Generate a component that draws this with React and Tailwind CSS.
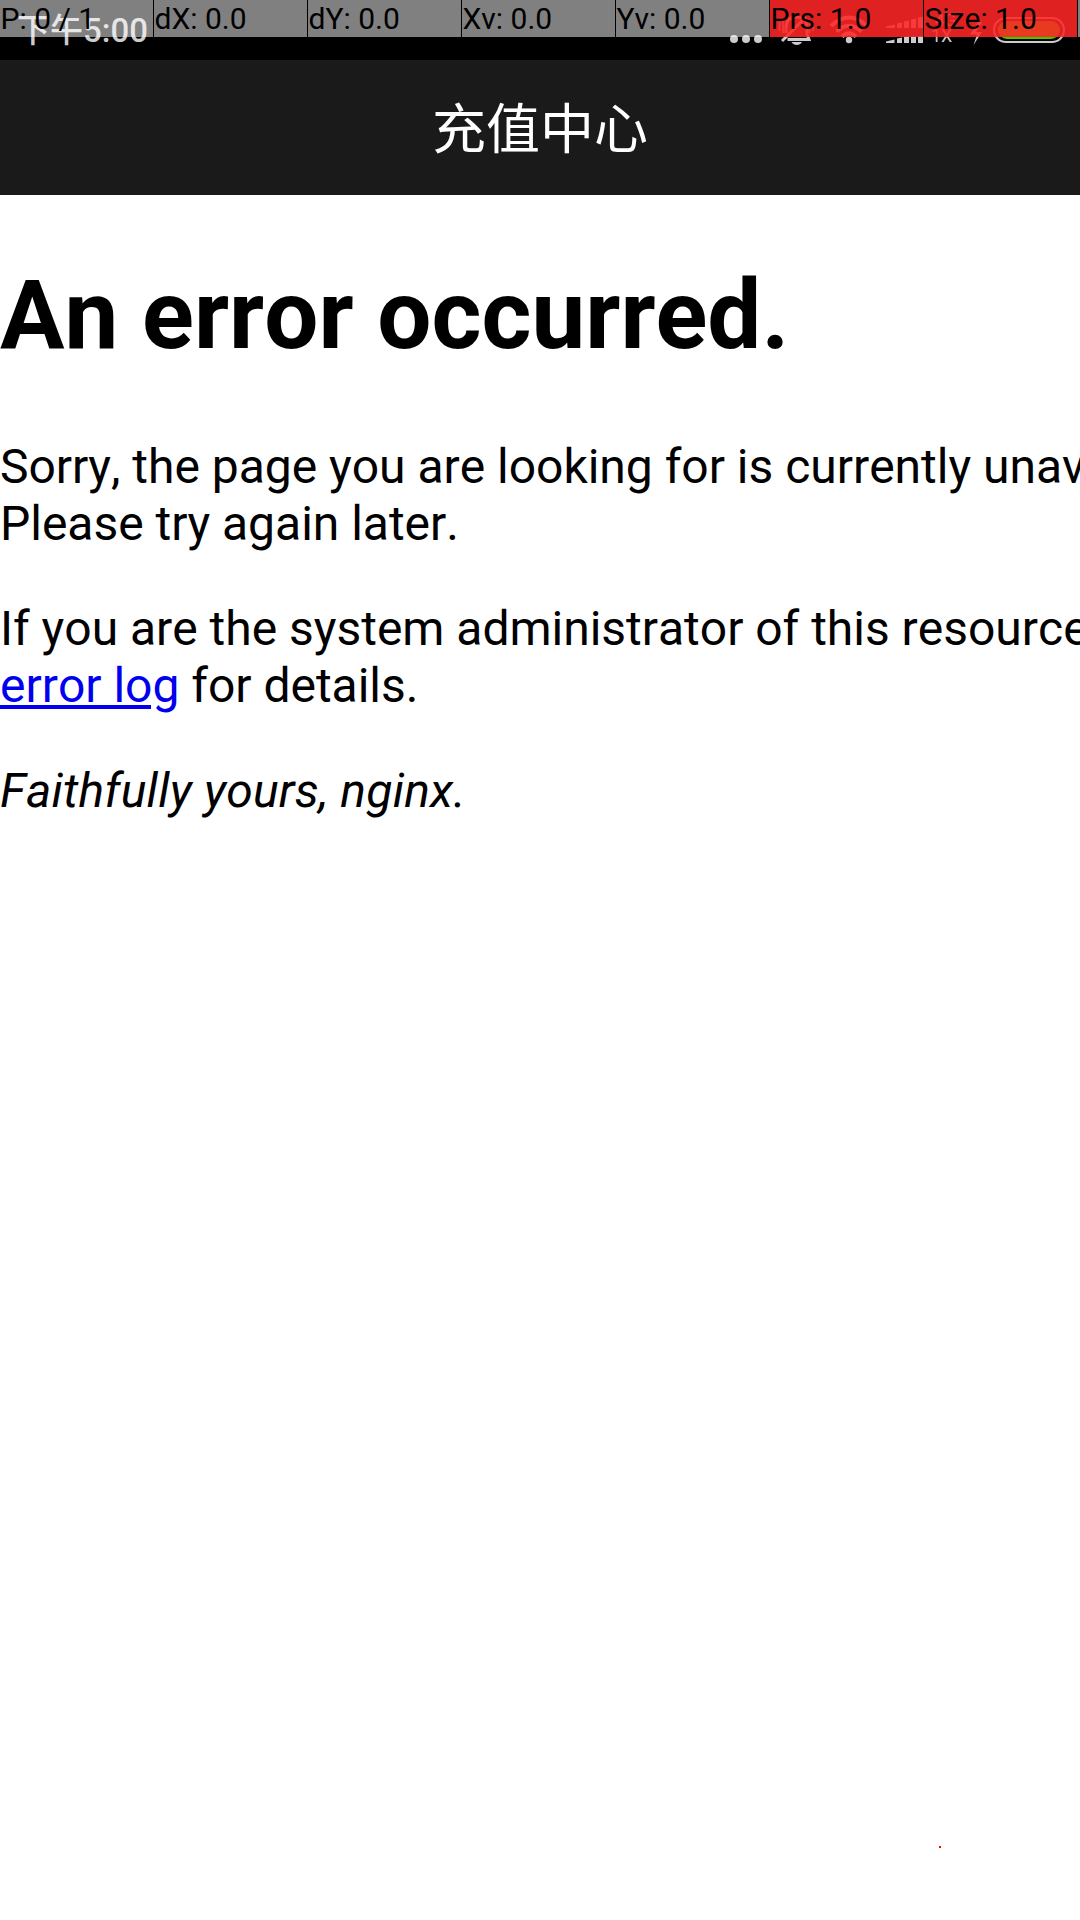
const cells = ['P: 0 / 1', 'dX: 0.0', 'dY: 0.0', 'Xv: 0.0', 'Yv: 0.0', 'Prs: 1.0', 'Size: 1.0'];

function StatusIcons() {
  return (
    <svg className="block" width="360" height="60" viewBox="720 0 360 60" fill="none" stroke="#cccccc">
      <g fill="#cccccc" stroke="none">
        <circle cx="734" cy="39" r="4" />
        <circle cx="746" cy="39" r="4" />
        <circle cx="758" cy="39" r="4" />
      </g>
      <g strokeWidth="3">
        <path d="M786 33V28C786 20 790 17 796 17C803 17 807 21 807 28V34L809 39.500H787.500" />
        <path d="M782 41L806 17" strokeWidth="3" />
        <path d="M779.5 22v9M783 20v13M809.5 20v13M813 22v9" strokeWidth="1.5" />
        <path d="M791.500 42h10.500c-2 4-8.500 4-10.500 0z" fill="#cccccc" stroke="none" />
      </g>
      <g strokeWidth="3.8">
        <path d="M831 26Q849 9 867 26" />
        <path d="M836.500 31.5Q849 20 861.500 31.5" />
        <path d="M842 36.5Q849 30 856 36.5" />
        <circle cx="849" cy="40" r="3.200" fill="#cccccc" stroke="none" />
      </g>
      <g fill="#cccccc" stroke="none">
        <path d="M886 28v-1.6l9-2v3.600zM897 28v-4.500l5-1v5.500zM904 28v-6.500l5-1v7.500zM911 28v-8.500l5-1v9.500zM918 28V17.500l5-1v11.500z" />
        <path d="M886 43v-1.600l8.500-2V43zM897 43v-4.500l5-1v5.500zM904 43v-6l5-1v7zM911 43v-6.500h5V43zM918 43v-7h5v7z" />
        <path d="M978 22L970 34.500h7L973.500 45 982 32h-6l6-10z" />
      </g>
      <rect x="994" y="18" width="70" height="24" rx="12" strokeWidth="2" />
      <rect x="998" y="21" width="62" height="18" rx="9" fill="#46c800" stroke="none" />
    </svg>
  );
}

export default function App() {
  return (
    <div className="relative h-[1920px] w-[1080px] overflow-hidden bg-white font-['Roboto','Noto_Sans_CJK_SC',sans-serif] text-black [font-kerning:none]">
      <div className="relative flex h-[60px] justify-between bg-black">
        <span className="ml-[17px] mt-[10px] whitespace-nowrap text-[33px] font-medium leading-[42px] text-[#cccccc]">下午5:00</span>
        <StatusIcons />
        <div className="absolute left-[931px] top-[12px] text-[17px] leading-[16px] text-[#cccccc]">
          <div className="pl-[4px]">4G</div>
          <div className="text-[18px]">1X</div>
        </div>
      </div>
      <header className="flex h-[135px] items-center justify-center bg-[#1a1a1a] pt-[5px] text-[54px] text-white">充值中心</header>
      <main className="whitespace-nowrap text-[48px] leading-[57px] tracking-[-0.02px]">
        <h1 className="mt-[64px] text-[96px] font-bold leading-[113px]">An error occurred.</h1>
        <p className="mt-[66px]">Sorry, the page you are looking for is currently unavailable.<br />Please try again later.</p>
        <p className="mt-[48px]">If you are the system administrator of this resource then you should check the<br /><a className="text-[#0000ee] underline">error log</a> for details.</p>
        <p className="mt-[48px] italic tracking-[0.21px]">Faithfully yours, nginx.</p>
      </main>
      <div className="absolute left-0 top-0 flex h-[37px] w-[1080px] gap-px whitespace-nowrap text-[30px] leading-[38px]">
        {cells.map((c, i) => (
          <div key={c} className={i > 4 ? 'h-[37px] w-[153px] bg-[#ff2525]/88 pl-[0.5px]' : 'h-[37px] w-[153px] bg-white/50 pl-[0.5px]'}>{c}</div>
        ))}
        <div className="h-[37px] grow bg-white/50" />
      </div>
      <div className="absolute left-[939px] top-[1846px] h-[2px] w-[2px] bg-[#ff0000]" />
    </div>
  );
}
